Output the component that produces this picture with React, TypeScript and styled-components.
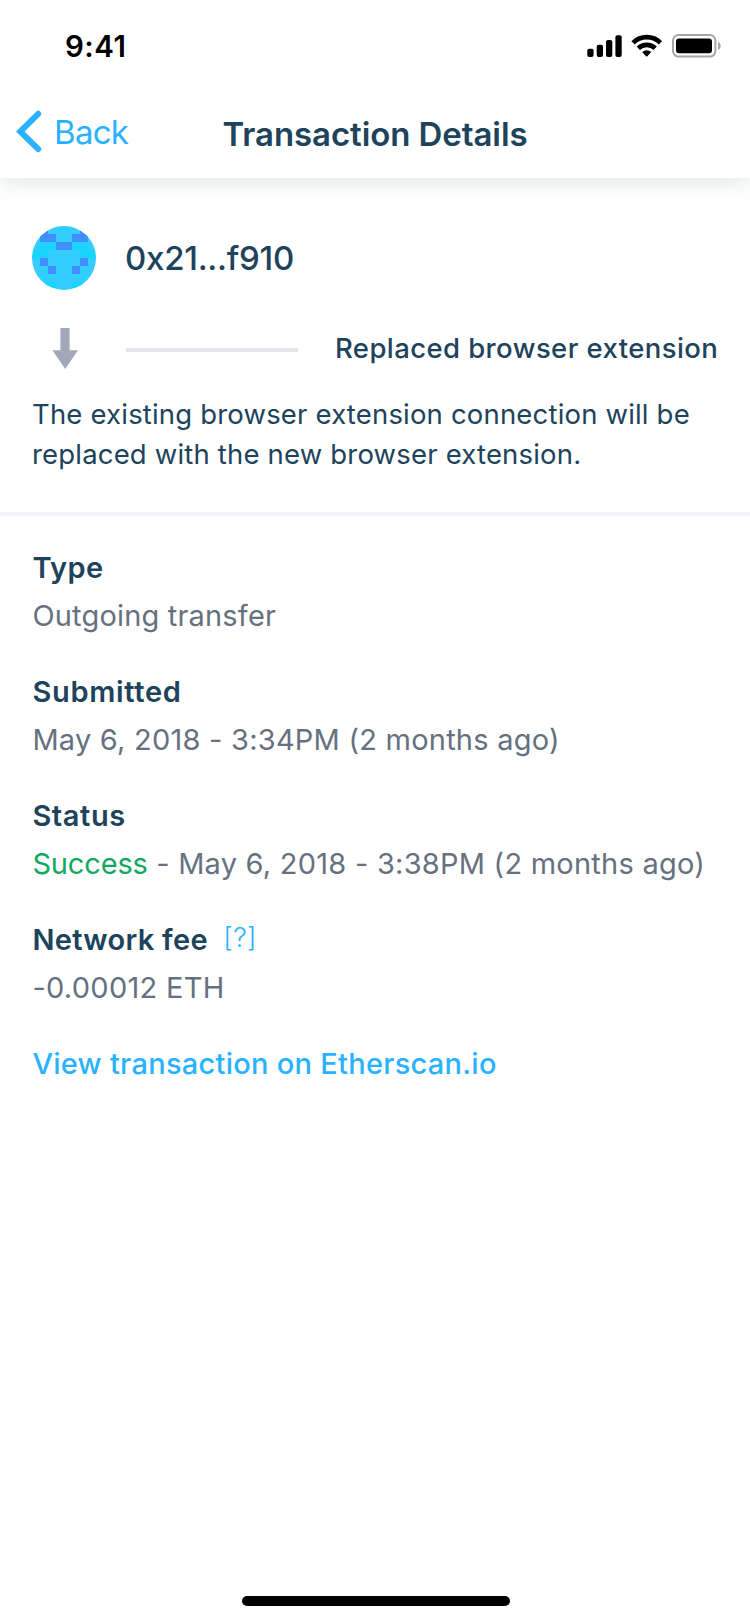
import React from 'react';
import styled, { createGlobalStyle } from 'styled-components';

const color = {
  ink: '#20435c',
  muted: '#667180',
  link: '#29b2ff',
  success: '#10a962',
  arrow: '#a2a8ba',
  rule: '#e5e6eb',
  divider: '#f3f4f9',
};

const GlobalStyle = createGlobalStyle`
  *, *::before, *::after { box-sizing: border-box; }
  body {
    margin: 0;
    background: #fff;
    font-family: Inter, sans-serif;
    -webkit-font-smoothing: antialiased;
  }
  p, h1, h2, dl, dt, dd { margin: 0; }
`;

const Screen = styled.div`
  display: flex;
  flex-direction: column;
  width: 750px;
  height: 1624px;
  overflow: hidden;
  background: #fff;
  color: ${color.ink};
`;

const Header = styled.header`
  height: 178px;
  flex: none;
  background: #fff;
  box-shadow: 0 4px 20px rgba(40, 84, 100, 0.15);
`;

const StatusBar = styled.div`
  display: flex;
  justify-content: space-between;
  align-items: flex-start;
  height: 88px;
  padding: 28px 29px 0 65px;
  color: #000;
`;

const Clock = styled.span`
  font-size: 29.5px;
  font-weight: 600;
  line-height: 36px;
  letter-spacing: 0.5px;
`;

const StatusIcons = styled.svg`
  display: block;
  margin-top: 6px;
`;

const NavBar = styled.nav`
  display: grid;
  grid-template-columns: 1fr auto 1fr;
  height: 90px;
  padding: 0 16px;
`;

const BackLink = styled.a`
  display: flex;
  align-items: flex-start;
  gap: 12px;
  padding-top: 22px;
  color: ${color.link};
  font-size: 33px;
  line-height: 44px;
  letter-spacing: -0.7px;
`;

const Title = styled.h1`
  padding-top: 24px;
  font-size: 33px;
  font-weight: 600;
  line-height: 44px;
  letter-spacing: -0.08px;
`;

const Summary = styled.section`
  padding: 48px 32px 38px;
  border-bottom: 4px solid ${color.divider};
`;

const Account = styled.div`
  display: flex;
  align-items: center;
  gap: 29px;
`;

const Avatar = styled.svg`
  display: block;
  border-radius: 50%;
`;

const Address = styled.span`
  font-size: 33px;
  font-weight: 500;
  line-height: 44px;
  letter-spacing: -0.27px;
`;

const Action = styled.div`
  display: flex;
  align-items: center;
  height: 44px;
  margin-top: 38px;
  padding-left: 20px;
`;

const DownArrow = styled.svg`
  flex: none;
  margin-bottom: 3px;
`;

const Rule = styled.span`
  flex: none;
  width: 172px;
  height: 4px;
  margin: 0 37px 0 46px;
  background: ${color.rule};
`;

const ActionLabel = styled.span`
  margin-top: -4px;
  font-size: 27.5px;
  font-weight: 500;
  line-height: 36px;
  letter-spacing: 0.41px;
  white-space: nowrap;
`;

const Description = styled.p`
  margin-top: 22px;
  font-size: 27.5px;
  line-height: 40px;
  letter-spacing: 0.18px;
  white-space: nowrap;
`;

const Details = styled.section`
  flex: 1;
  padding: 28px 32px 0 32.4px;
`;

const FieldList = styled.dl`
  display: flex;
  flex-direction: column;
  gap: 28px;
`;

const Field = styled.div`
  font-size: 29px;
  line-height: 48px;
  white-space: nowrap;
`;

const Label = styled.dt<{ $spacing: number }>`
  display: flex;
  font-weight: 600;
  letter-spacing: ${(p) => p.$spacing}px;
`;

const Value = styled.dd<{ $spacing: number }>`
  color: ${color.muted};
  letter-spacing: ${(p) => p.$spacing}px;
`;

const Success = styled.span`
  color: ${color.success};
  letter-spacing: -0.15px;
`;

const Help = styled.a`
  margin: -2px 0 2px 15.5px;
  color: ${color.link};
  font-size: 27px;
  font-weight: 300;
  letter-spacing: 0.4px;
`;

const ExplorerLink = styled.a`
  display: block;
  margin-top: 28px;
  color: ${color.link};
  font-size: 29px;
  font-weight: 500;
  line-height: 48px;
  letter-spacing: 0.27px;
`;

const HomeIndicator = styled.div`
  flex: none;
  align-self: center;
  width: 268px;
  height: 10px;
  margin: 0 0 18px 2px;
  border-radius: 5px;
  background: #000;
`;

// One letter per cell: l = light, c = cyan, d = dark blue.
const IDENTICON = [
  'ldlllldl',
  'lddllddl',
  'lccddccl',
  'ccllllcc',
  'ldlllldl',
  'lldlldll',
  'llllllll',
  'lccllccl',
];
const CELL: Record<string, string> = { l: '#31ceff', c: '#18d4ff', d: '#438eff' };

function Identicon() {
  return (
    <Avatar width="64" height="64" viewBox="0 0 8 8" shapeRendering="crispEdges">
      {IDENTICON.flatMap((row, y) =>
        row.split('').map((cell, x) => (
          <rect key={`${x}-${y}`} x={x} y={y} width="1" height="1" fill={CELL[cell]} />
        )),
      )}
    </Avatar>
  );
}

function DeviceStatus() {
  return (
    <StatusIcons width="134" height="24" viewBox="587 34 134 24">
      <rect x="587.3" y="48.7" width="6.3" height="8.3" rx="2" />
      <rect x="596.7" y="44.7" width="6.3" height="12.3" rx="2" />
      <rect x="606" y="40" width="6.3" height="17" rx="2" />
      <rect x="615.4" y="35.2" width="6.3" height="21.8" rx="2" />
      <g fill="none" stroke="#000" strokeWidth="4.7">
        <path d="M633.1 42.8a19.2 19.2 0 0 1 27.3 0" />
        <path d="M638.3 48.3a12.1 12.1 0 0 1 16.9 0" />
      </g>
      <path d="M642.2 52a6.6 6.6 0 0 1 9 0l-3.8 4.2q-.7.7-1.4 0z" />
      <rect x="673" y="35" width="42.4" height="21.6" rx="5.5" fill="none" stroke="#a6a6a6" strokeWidth="2" />
      <rect x="676" y="38.6" width="36" height="14.6" rx="3" />
      <path d="M718 41.8c3.6 1.6 3.6 6.6 0 8.2z" fill="#a6a6a6" />
    </StatusIcons>
  );
}

export default function App() {
  return (
    <>
      <GlobalStyle />
      <Screen>
        <Header>
          <StatusBar>
            <Clock>9:41</Clock>
            <DeviceStatus />
          </StatusBar>
          <NavBar>
            <BackLink>
              <svg width="26" height="44" viewBox="0 0 26 44">
                <path
                  d="M22.2 3.8 4.2 21.5l18 17.7"
                  fill="none"
                  stroke={color.link}
                  strokeWidth="6"
                  strokeLinecap="round"
                />
              </svg>
              Back
            </BackLink>
            <Title>Transaction Details</Title>
          </NavBar>
        </Header>

        <Summary>
          <Account>
            <Identicon />
            <Address>0x21...f910</Address>
          </Account>
          <Action>
            <DownArrow width="28" height="41" viewBox="0 0 28 41">
              <path d="M8.4 0h9.2v22.3H26L13.2 41 .4 22.3h8z" fill={color.arrow} />
            </DownArrow>
            <Rule />
            <ActionLabel>Replaced browser extension</ActionLabel>
          </Action>
          <Description>
            The existing browser extension connection will be
            <br />
            replaced with the new browser extension.
          </Description>
        </Summary>

        <Details>
          <FieldList>
            <Field>
              <Label $spacing={0.4}>Type</Label>
              <Value $spacing={0.18}>Outgoing transfer</Value>
            </Field>
            <Field>
              <Label $spacing={0.7}>Submitted</Label>
              <Value $spacing={0.23}>May 6, 2018 - 3:34PM (2 months ago)</Value>
            </Field>
            <Field>
              <Label $spacing={0.6}>Status</Label>
              <Value $spacing={0.24}>
                <Success>Success</Success> - May 6, 2018 - 3:38PM (2 months ago)
              </Value>
            </Field>
            <Field>
              <Label $spacing={0.3}>
                Network fee <Help>[?]</Help>
              </Label>
              <Value $spacing={0.28}>-0.00012 ETH</Value>
            </Field>
          </FieldList>
          <ExplorerLink>View transaction on Etherscan.io</ExplorerLink>
        </Details>
        <HomeIndicator />
      </Screen>
    </>
  );
}
